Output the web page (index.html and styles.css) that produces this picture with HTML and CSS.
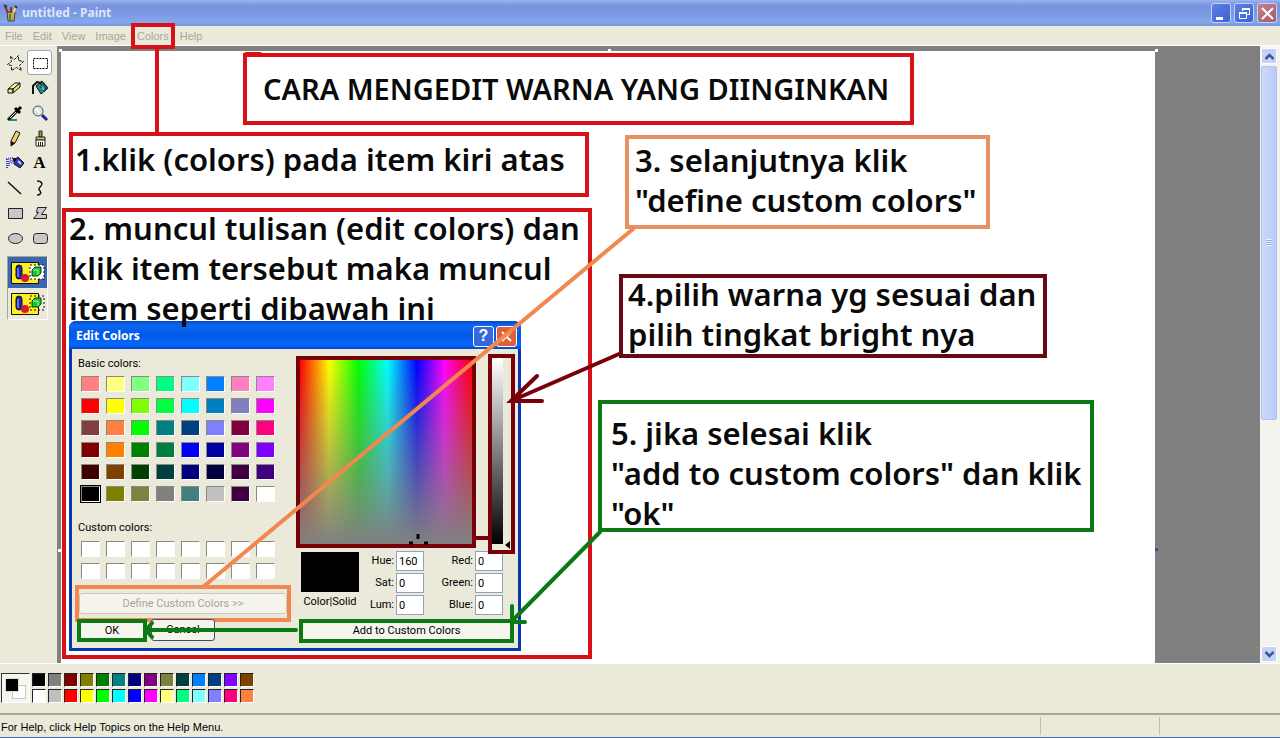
FILE: index.html
```html
<!DOCTYPE html>
<html lang="id">
<head>
<meta charset="utf-8">
<title>untitled - Paint</title>
<link rel="stylesheet" href="styles.css">
</head>
<body>
<div class="window">
  <header class="titlebar">
    <svg class="app-icon" width="16" height="18" viewBox="0 0 16 18"><path d="M4 8h8l-1 9H5z" fill="#c8a850" stroke="#4a4030"/><path d="M5 9L2 2M8 9V3" stroke="#8a3038" stroke-width="2"/><path d="M10 9l3-6" stroke="#f0e060" stroke-width="2"/><path d="M7 10v6" stroke="#3f8a4a" stroke-width="2"/><path d="M1 1l3 2M12 2l2 2" stroke="#333" stroke-width="2"/></svg>
    <h1 class="window-title">untitled - Paint</h1>
    <div class="window-buttons">
      <button class="wbtn" aria-label="Minimize"><svg width="17" height="17" viewBox="0 0 17 17"><path d="M3 12h7v3H3z" fill="#fff"/></svg></button>
      <button class="wbtn" aria-label="Restore"><svg width="17" height="17" viewBox="0 0 17 17" fill="none" stroke="#fff"><path d="M6.500 6V3.500h7v6H11M3.500 7.500h7v6h-7z"/><path d="M6 4h8M3 8h8" stroke-width="2"/></svg></button>
      <button class="wbtn wbtn-close" aria-label="Close"><svg width="17" height="17" viewBox="0 0 17 17"><path d="M3 3l11 11M14 3l-11 11" stroke="#fff" stroke-width="2"/></svg></button>
    </div>
  </header>

  <nav class="menubar">
    <button class="menu">File</button>
    <button class="menu">Edit</button>
    <button class="menu">View</button>
    <button class="menu">Image</button>
    <button class="menu menu-marked">Colors</button>
    <button class="menu">Help</button>
  </nav>

  <main class="workspace">
    <aside class="toolbox">
      <div class="tools">
        <button class="tool" aria-label="Free-Form Select"><svg width="18" height="18" viewBox="0 0 18 18"><path d="M4.500 2.500l4 3 4-4v5l5 1-4 4 2 5-5-3-5 3v-5l-4-1 4-3z" fill="none" stroke="#111" stroke-dasharray="3 1"/></svg></button>
        <button class="tool tool-active" aria-label="Select"><svg width="18" height="18" viewBox="0 0 18 18"><path d="M2.500 4.500h14v10h-14z" fill="none" stroke="#000" stroke-dasharray="2 1"/></svg></button>
        <button class="tool" aria-label="Eraser"><svg width="18" height="18" viewBox="0 0 18 18"><path d="M2 10l7-6h5l-7 6z" fill="#ffffa0" stroke="#111"/><path d="M2 10h5v4H2zM7 14l7-6V4l-7 6z" fill="#f0e488" stroke="#111"/></svg></button>
        <button class="tool" aria-label="Fill"><svg width="18" height="18" viewBox="0 0 18 18"><path d="M5 7l6-5 6 7-7 6z" fill="#208890" stroke="#111"/><path d="M9 6l5 6" stroke="#e0f4f4"/><path d="M12 4l4 5-3 3" stroke="#104048" stroke-width="2" fill="none"/><path d="M2 15V7l4-4 4 1" fill="none" stroke="#111" stroke-width="2"/><path d="M10 3v6" stroke="#111"/></svg></button>
        <button class="tool" aria-label="Pick Color"><svg width="18" height="18" viewBox="0 0 18 18"><path d="M3 16h8" stroke="#209088" stroke-width="2"/><path d="M2 16l9-9" stroke="#111" stroke-width="3"/><path d="M4 14l6-6" stroke="#d8f0f0"/><path d="M9 4l5 5M11 7l4-4" stroke="#000" stroke-width="3"/></svg></button>
        <button class="tool" aria-label="Magnifier"><svg width="18" height="18" viewBox="0 0 18 18"><path d="M11 11l5 5" stroke="#2020a0" stroke-width="3"/><circle cx="7" cy="7" r="5" fill="#d8e4ec" stroke="#555"/><path d="M5 5l4 4" stroke="#fff" stroke-width="2"/></svg></button>
        <button class="tool" aria-label="Pencil"><svg width="18" height="18" viewBox="0 0 18 18"><path d="M5 12l5-10 4 2-5 10-4 3z" fill="#f0d060" stroke="#111"/><path d="M5 12l4 2-4 3z" fill="#111"/></svg></button>
        <button class="tool" aria-label="Brush"><svg width="18" height="18" viewBox="0 0 18 18"><path d="M8 2h3v6H8z" fill="#b09030" stroke="#222"/><path d="M5 8h9v3H5z" fill="#d8c060" stroke="#222"/><path d="M5 11h9v6H5z" fill="#fff" stroke="#222"/><path d="M7.500 13v4M9.500 13v4M11.500 13v4" stroke="#222"/></svg></button>
        <button class="tool" aria-label="Airbrush"><svg width="18" height="18" viewBox="0 0 18 18"><path d="M8 6l4-3 6 6-4 5-6-4z" fill="#2838a0" stroke="#101040"/><path d="M12 7l3 3" stroke="#c8d0ff" stroke-width="2"/><path d="M7 4h3v3H7z" fill="#111"/><path d="M7 4L1 5v10M5 6L3 8v4M7 7L5 9" fill="none" stroke="#3040c0" stroke-dasharray="1 1" stroke-width="2"/></svg></button>
        <button class="tool tool-text" aria-label="Text">A</button>
        <button class="tool" aria-label="Line"><svg width="18" height="18" viewBox="0 0 18 18"><path d="M2 3l13 12" stroke="#111" stroke-width="1.500"/></svg></button>
        <button class="tool" aria-label="Curve"><svg width="18" height="18" viewBox="0 0 18 18"><path d="M6 2c5 0 6 3 4 5s-3 3-1 5 0 4-3 4" fill="none" stroke="#111" stroke-width="1.500"/></svg></button>
        <button class="tool" aria-label="Rectangle"><svg width="18" height="18" viewBox="0 0 18 18"><path d="M2.500 4.500h14v10h-14z" fill="#c8c8c8" stroke="#222"/></svg></button>
        <button class="tool" aria-label="Polygon"><svg width="18" height="18" viewBox="0 0 18 18"><path d="M6.500 3.500h9l-5 7h5v4h-13l5-6h-2z" fill="#c8c8c8" stroke="#222"/></svg></button>
        <button class="tool" aria-label="Ellipse"><svg width="18" height="18" viewBox="0 0 18 18"><ellipse cx="9.500" cy="9.500" rx="7" ry="5" fill="#c8c8c8" stroke="#222"/></svg></button>
        <button class="tool" aria-label="Rounded Rectangle"><svg width="18" height="18" viewBox="0 0 18 18"><rect x="2.500" y="4.500" width="14" height="10" rx="3" fill="#c8c8c8" stroke="#222"/></svg></button>
      </div>
      <div class="options">
        <button class="option option-active" aria-label="Opaque"><svg width="36" height="26" viewBox="0 0 36 26"><path d="M1.500 2.500h27v21h-27z" fill="#ffee20" stroke="#111"/><path d="M20 5h14v14H20z" fill="#fff" stroke="#111" stroke-dasharray="2 2"/><rect x="6" y="5" width="6" height="14" rx="3" fill="#1828b0" stroke="#111"/><path d="M8 8v9" stroke="#b0b8ff"/><circle cx="15" cy="18" r="4" fill="#d81838"/><path d="M22 10l3-3h6v6l-3 3h-6z" fill="#20c030" stroke="#064010"/><path d="M23 10h5v5" stroke="#a0ffa0" fill="none"/></svg></button>
        <button class="option" aria-label="Transparent"><svg width="36" height="26" viewBox="0 0 36 26"><path d="M1.500 2.500h27v21h-27z" fill="#ffee20" stroke="#111"/><path d="M20 5h14v14H20z" fill="none" stroke="#111" stroke-dasharray="2 2"/><rect x="6" y="5" width="6" height="14" rx="3" fill="#1828b0" stroke="#111"/><path d="M8 8v9" stroke="#b0b8ff"/><circle cx="15" cy="18" r="4" fill="#d81838"/><path d="M22 10l3-3h6v6l-3 3h-6z" fill="#20c030" stroke="#064010"/><path d="M23 10h5v5" stroke="#a0ffa0" fill="none"/></svg></button>
      </div>
    </aside>

    <div class="viewport">
      <div class="paper">
        <section class="dialog" aria-label="Edit Colors">
          <header class="dialog-head">
            <h2 class="dialog-title">Edit Colors</h2>
            <button class="dbtn" aria-label="Help">?</button>
            <button class="dbtn dbtn-close" aria-label="Close"><svg width="15" height="15" viewBox="0 0 15 15"><path d="M3 3l9 9M12 3l-9 9" stroke="#fff" stroke-width="2"/></svg></button>
          </header>
          <div class="dialog-body">
            <div class="dialog-left">
              <p class="label">Basic colors:</p>
              <div class="swatches" id="basic"></div>
              <p class="label label-custom">Custom colors:</p>
              <div class="swatches swatches-custom" id="custom"></div>
              <div class="mark-define"><button class="xp-button" disabled>Define Custom Colors &gt;&gt;</button></div>
              <div class="dialog-actions">
                <button class="marked-button ok">OK</button>
                <button class="xp-button cancel">Cancel</button>
              </div>
            </div>
            <div class="dialog-right">
              <div class="pickers">
                <div class="spectrum"></div>
                <div class="lum"><div class="lum-strip"></div><span class="lum-arrow"></span></div>
              </div>
              <div class="values">
                <div class="preview"><div class="preview-color"></div><span>Color|Solid</span></div>
                <label for="hue">Hue:</label><input id="hue" value="160">
                <label for="red">Red:</label><input id="red" value="0">
                <label for="sat">Sat:</label><input id="sat" value="0">
                <label for="green">Green:</label><input id="green" value="0">
                <label for="lum">Lum:</label><input id="lum" value="0">
                <label for="blue">Blue:</label><input id="blue" value="0">
              </div>
              <button class="marked-button add">Add to Custom Colors</button>
            </div>
          </div>
        </section>

        <p class="note note-title">CARA MENGEDIT WARNA YANG DIINGINKAN</p>
        <p class="note note-1">1.klik (colors) pada item kiri atas</p>
        <p class="note note-2">2. muncul tulisan (edit colors) dan<br>klik item tersebut maka muncul<br>item seperti dibawah ini</p>
        <p class="note note-3">3. selanjutnya klik<br>"define custom colors"</p>
        <p class="note note-4">4.pilih warna yg sesuai dan<br>pilih tingkat bright nya</p>
        <p class="note note-5">5. jika selesai klik<br>"add to custom colors" dan klik<br>"ok"</p>

        <svg class="strokes" width="1094" height="612" viewBox="61 51 1094 612" fill="none" stroke-linecap="round">
          <path d="M157 46V132" stroke="#d81018" stroke-width="4"/>
          <path d="M246 54h14" stroke="#d81018" stroke-width="4"/>
          <path d="M633 229L203 587" stroke="#f08850" stroke-width="4"/>
          <path d="M619 354L511 401M537 376L511 401H542" stroke="#780008" stroke-width="4"/>
          <path d="M476 538h12" stroke="#780008" stroke-width="4"/>
          <path d="M600 532L512 621M512 606v17M512 622h13" stroke="#0a7a14" stroke-width="4"/>
          <path d="M296 630H147M152 623l-6 7 6 7" stroke="#0a7a14" stroke-width="4"/>
          <path d="M418 534v5M409 543h4M424 543h4" stroke="#000" stroke-width="3" stroke-linecap="butt"/>
          <path d="M59 49h3v3h-3zM608 49h3v2h-3zM1155 49h3v3h-3zM58 549h3v3h-3z" fill="#fff"/>
          <path d="M1155 548h3v3h-3z" fill="#2858a8"/>
        </svg>
      </div>
    </div>

    <div class="scrollbar">
      <button class="scroll-btn" aria-label="Scroll up"><svg width="11" height="9" viewBox="0 0 11 9"><path d="M1.500 7l4-4 4 4" fill="none" stroke="#405890" stroke-width="2.500"/></svg></button>
      <div class="track"><div class="thumb"><span class="grip"></span></div></div>
      <button class="scroll-btn" aria-label="Scroll down"><svg width="11" height="9" viewBox="0 0 11 9"><path d="M1.500 2l4 4 4-4" fill="none" stroke="#405890" stroke-width="2.500"/></svg></button>
    </div>
  </main>

  <section class="palette" aria-label="Color palette">
    <div class="current"><span class="current-back"></span><span class="current-front"></span></div>
    <div class="palette-grid" id="palette"></div>
  </section>

  <footer class="status">
    <span class="status-text">For Help, click Help Topics on the Help Menu.</span>
    <span class="status-cell"></span>
    <span class="status-cell"></span>
  </footer>
</div>
<script src="script.js"></script>
</body>
</html>
```

FILE: styles.css
```css
* { box-sizing: border-box; }

body {
  margin: 0;
  font: 11px/14px "Liberation Sans", Arial, sans-serif;
  color: #000;
}

h1, h2, p { margin: 0; }

button {
  margin: 0;
  padding: 0;
  border: 0;
  background: none;
  font: inherit;
  color: inherit;
}

svg { display: block; }

.window {
  display: flex;
  flex-direction: column;
  height: 100vh;
  background: #ebe9d9;
}

/* Title bar */
.titlebar {
  display: flex;
  align-items: center;
  flex: none;
  height: 26px;
  padding: 0 3px;
  gap: 3px;
  background: linear-gradient(#9ab4ee, #7a94e0 20%, #7c98e2 50%, #84a8ee 85%, #7894dc);
}

.window-title {
  flex: 1;
  font: bold 12px/18px "Noto Sans", sans-serif;
  color: #dce6fa;
}

.window-buttons { display: flex; gap: 3px; }

.wbtn {
  display: grid;
  place-items: center;
  width: 20px;
  height: 20px;
  border: 1px solid #c4d2f4;
  border-radius: 3px;
  background: linear-gradient(135deg, #5c80e4, #3c62d6);
}

.wbtn-close { background: linear-gradient(135deg, #c08090, #a85c68); }

/* Menu bar */
.menubar {
  display: flex;
  align-items: center;
  flex: none;
  height: 20px;
  border-bottom: 1px solid #fff;
}

.menu {
  height: 18px;
  padding: 0 5px;
  color: #aaa797;
}

.menu-marked {
  z-index: 2;
  height: 26px;
  padding: 0 2px;
  border: 4px solid #d81018;
}

/* Workspace */
.workspace {
  display: flex;
  flex: 1;
  min-height: 0;
}

.toolbox {
  flex: none;
  width: 57px;
  padding: 4px 0 0 2px;
}

.tools {
  display: grid;
  grid-template-columns: 25px 25px;
  grid-auto-rows: 25px;
}

.tool {
  display: grid;
  place-items: center;
  border: 1px solid transparent;
  border-radius: 3px;
}

.tool-active { border-color: #9aa8b4; background: #fff; }

.tool-text { font: bold 17px/20px "Liberation Serif", serif; }

.options {
  display: flex;
  flex-direction: column;
  width: 41px;
  margin: 6px 0 0 5px;
  border: 1px solid #a8a698;
  border-right-color: #fff;
  border-bottom-color: #fff;
}

.option {
  display: grid;
  place-items: center;
  height: 31px;
}

.option-active { background: #3868b0; }

.viewport {
  flex: 1;
  min-width: 0;
  padding: 5px 0 0 4px;
  overflow: hidden;
  background: #808080;
}

.paper {
  position: relative;
  width: 1094px;
  height: 100%;
  background: #fff;
}

/* Notes drawn on the canvas; the frame is an outline so text may sit over it */
.note {
  position: absolute;
  outline: 4px solid #d81018;
  outline-offset: -4px;
  font: 600 31px/40px "Noto Sans", sans-serif;
  color: #0a0a0a;
  white-space: nowrap;
}

.note-title { left: 182px; top: 2px; width: 671px; height: 72px; padding: 16px 20px; font-size: 29px; }
.note-1 { left: 8px; top: 81px; width: 520px; height: 65px; padding: 7px 6px; }
.note-2 { left: 1px; top: 157px; width: 530px; height: 451px; padding: 0 7px; }
.note-3 { left: 564px; top: 84px; width: 365px; height: 94px; padding: 5px 10px; outline-color: #e89060; }
.note-4 { left: 558px; top: 223px; width: 428px; height: 84px; padding: 0 9px; outline-color: #680810; }
.note-5 { left: 537px; top: 349px; width: 496px; height: 132px; padding: 13px; outline-color: #0a7a14; }

.strokes {
  position: absolute;
  left: 0;
  top: 0;
  overflow: visible;
  pointer-events: none;
}

/* Edit Colors dialog */
.dialog {
  position: absolute;
  left: 8px;
  top: 270px;
  width: 452px;
  height: 330px;
  border: 3px solid #0838b0;
  border-top: 0;
  border-radius: 7px 7px 0 0;
  background: #0838b0;
  font-family: Roboto, "Liberation Sans", sans-serif;
}

.dialog-head {
  display: flex;
  align-items: center;
  gap: 2px;
  height: 28px;
  margin: 0 -3px;
  padding: 2px 4px 0 7px;
  border-radius: 7px 7px 0 0;
  background: linear-gradient(#0848c0, #0a68f0 15%, #0458e8 50%, #0468fc 85%, #0448c8);
}

.dialog-title {
  flex: 1;
  font: bold 12px/16px "Noto Sans", sans-serif;
  color: #fff;
}

.dbtn {
  display: grid;
  place-items: center;
  width: 21px;
  height: 21px;
  border: 1px solid #fff;
  border-radius: 3px;
  background: #3468e0;
  font: bold 16px/18px "Liberation Sans", sans-serif;
  color: #fff;
}

.dbtn-close { background: #e06038; }

.dialog-body {
  display: flex;
  gap: 5px;
  height: 299px;
  padding: 5px 3px 0;
  background: #ebe9d9;
}

.dialog-left { width: 216px; padding-top: 3px; }

.label { padding-left: 3px; }

.label-custom { margin-top: 19px; }

.swatches {
  display: grid;
  grid-template-columns: repeat(8, 19px);
  grid-auto-rows: 16px;
  gap: 6px;
  margin: 5px 0 0 6px;
}

.swatches-custom { margin-top: 6px; }

.swatch {
  border: 1px solid #8c8a80;
  border-right-color: #fff;
  border-bottom-color: #fff;
}

.swatch-selected { outline: 1px solid #000; }

.mark-define {
  display: flex;
  height: 37px;
  margin-top: 6px;
  padding: 4px 0;
  border: 4px solid #f08850;
}

.xp-button {
  border: 1px solid #385078;
  border-radius: 3px;
  background: #f4f3ec;
}

.xp-button:disabled {
  flex: 1;
  border-color: #cbc9bc;
  color: #a8a698;
}

.dialog-actions {
  display: flex;
  gap: 4px;
  margin: -3px 0 0 2px;
}

.marked-button {
  height: 23px;
  border: 4px solid #0a7a14;
  background: #f6f5ee;
  line-height: 14px;
}

.ok { width: 70px; }

.cancel { width: 64px; height: 22px; }

.dialog-right { width: 219px; }

.pickers {
  display: flex;
  justify-content: space-between;
  align-items: flex-start;
}

.spectrum {
  width: 180px;
  height: 192px;
  margin-top: 2px;
  border: 4px solid #780008;
  background:
    linear-gradient(rgba(128, 128, 128, 0), rgba(128, 128, 128, 1)),
    linear-gradient(90deg, #f00, #ff0 17%, #0f0 34%, #0ff 51%, #00f 68%, #f0f 84%, #f00);
}

.lum {
  position: relative;
  width: 27px;
  height: 200px;
  border: 4px solid #780008;
}

.lum-strip {
  width: 11px;
  height: 186px;
  background: linear-gradient(#fff, #808080 50%, #000);
}

.lum-arrow {
  position: absolute;
  right: 1px;
  bottom: 1px;
  border: 4px solid transparent;
  border-right: 5px solid #000;
  border-left: 0;
}

.values {
  display: grid;
  grid-template-columns: 58px 33px 28px 47px 28px;
  grid-auto-rows: 20px;
  column-gap: 2px;
  row-gap: 2px;
  align-items: center;
  margin: -3px 0 0 5px;
}

.values label { text-align: right; }

.values input {
  width: 28px;
  height: 20px;
  padding: 0 2px;
  border: 1px solid #8fa4bc;
  background: #fff;
  font: inherit;
}

.preview {
  grid-row: span 3;
  align-self: start;
  display: flex;
  flex-direction: column;
  align-items: center;
  gap: 3px;
  padding-top: 1px;
  white-space: nowrap;
}

.preview-color { width: 58px; height: 40px; background: #000; }

.add { width: 215px; height: 24px; margin: 4px 0 0 3px; }

/* Scroll bar */
.scrollbar {
  display: flex;
  flex-direction: column;
  flex: none;
  width: 20px;
  padding: 2px 3px 1px 1px;
  background: #f4f3ee;
}

.scroll-btn {
  display: grid;
  place-items: center;
  height: 16px;
  border: 1px solid #fff;
  border-radius: 2px;
  background: #c4d2fa;
}

.track { flex: 1; padding-top: 2px; }

.thumb {
  display: grid;
  place-items: center;
  height: 61%;
  border: 1px solid #b0c2ee;
  border-radius: 2px;
  background: linear-gradient(90deg, #cad8fe, #bccbf8);
}

.grip {
  width: 6px;
  height: 7px;
  background: repeating-linear-gradient(#eef2ff 0 1px, #94a8e0 1px 2px);
}

/* Palette */
.palette {
  display: flex;
  align-items: flex-start;
  flex: none;
  gap: 2px;
  height: 50px;
  padding: 9px 0 0 1px;
  border-top: 1px solid #fff;
}

.current {
  position: relative;
  width: 29px;
  height: 30px;
  border: 1px solid #333;
  border-right-color: #fff;
  border-bottom-color: #fff;
  background: #f6f5ee;
}

.current-back, .current-front {
  position: absolute;
  width: 14px;
  height: 14px;
  border: 1px solid #c8c6b8;
  background: #fff;
}

.current-back { left: 10px; top: 11px; }

.current-front { left: 3px; top: 4px; background: #000; border: 1px solid #ddd; }

.palette-grid {
  display: grid;
  grid-template-columns: repeat(14, 14px);
  grid-auto-rows: 14px;
  gap: 2px;
}

.paint {
  border: 1px solid #222;
  border-right-color: #fff;
  border-bottom-color: #fff;
}

/* Status bar */
.status {
  display: flex;
  align-items: center;
  flex: none;
  height: 25px;
  padding-right: 2px;
  border-top: 2px solid #aaa797;
  border-bottom: 1px solid #3868b0;
}

.status-text { flex: 1; padding: 2px 0 0 1px; }

.status-cell {
  width: 119px;
  height: 18px;
  border-left: 1px solid #c0beb0;
}
```

FILE: script.js
```js
const basic = `
ff8080 ffff80 80ff80 00ff80 80ffff 0080ff ff80c0 ff80ff
ff0000 ffff00 80ff00 00ff40 00ffff 0080c0 8080c0 ff00ff
804040 ff8040 00ff00 008080 004080 8080ff 800040 ff0080
800000 ff8000 008000 008040 0000ff 0000a0 800080 8000ff
400000 804000 004000 004040 000080 000040 400040 400080
000000 808000 808040 808080 408080 c0c0c0 400040 ffffff`;
const custom = 'ffffff '.repeat(16);
const palette = `
000000 808080 800000 808000 008000 008080 000080 800080 808040 004040 0080ff 004080 8000ff 804000
ffffff c0c0c0 ff0000 ffff00 00ff00 00ffff 0000ff ff00ff ffff80 00ff80 80ffff 8080ff ff0080 ff8040`;

function fill(id, list, className) {
  const host = document.getElementById(id);
  list.trim().split(/\s+/).forEach((hex) => {
    const b = document.createElement('button');
    b.className = className;
    b.style.backgroundColor = '#' + hex;
    b.setAttribute('aria-label', '#' + hex);
    host.append(b);
  });
}

fill('basic', basic, 'swatch');
fill('custom', custom, 'swatch');
fill('palette', palette, 'paint');
document.querySelectorAll('#basic .swatch')[40].classList.add('swatch-selected');
```
